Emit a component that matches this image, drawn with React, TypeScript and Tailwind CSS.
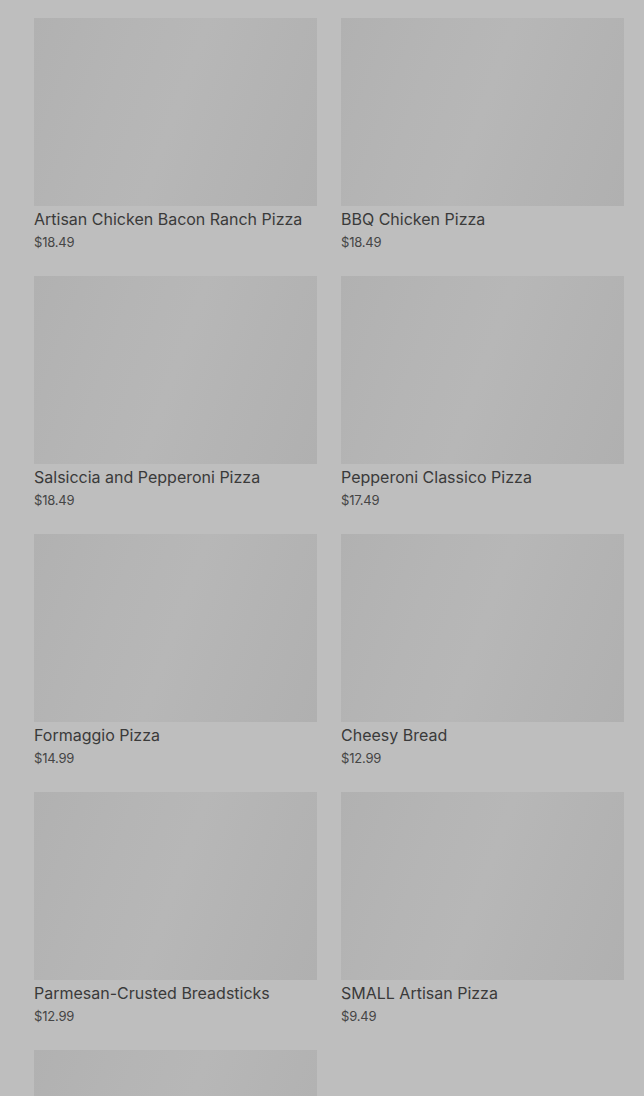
import React from "react";

const items = [
  ["Artisan Chicken Bacon Ranch Pizza", "$18.49"],
  ["BBQ Chicken Pizza", "$18.49"],
  ["Salsiccia and Pepperoni Pizza", "$18.49"],
  ["Pepperoni Classico Pizza", "$17.49"],
  ["Formaggio Pizza", "$14.99"],
  ["Cheesy Bread", "$12.99"],
  ["Parmesan-Crusted Breadsticks", "$12.99"],
  ["SMALL Artisan Pizza", "$9.49"],
  ["", ""],
];

export default function App() {
  return (
    <div className="h-[1096px] overflow-hidden bg-[#bebebe] pl-[34px] pr-[20px] pt-[18px]" style={{ fontFamily: "Inter, 'Noto Sans', sans-serif" }}>
      <div className="grid grid-cols-2 gap-x-[24px] gap-y-[24px]">
        {items.map(([name, price], i) => (
          <div key={i} className="flex flex-col">
            <div className="h-[188px] w-full bg-[linear-gradient(110deg,#b1b1b1_0%,#b5b5b5_30%,#b7b7b7_50%,#b4b4b4_70%,#b0b0b0_100%)]" />
            {name && (
              <>
                <div className="text-[16px] leading-[26px] text-[#3a3a3a]">{name}</div>
                <div className="text-[13px] leading-[20px] text-[#454545] tracking-[-0.2px]">{price}</div>
              </>
            )}
          </div>
        ))}
      </div>
    </div>
  );
}
